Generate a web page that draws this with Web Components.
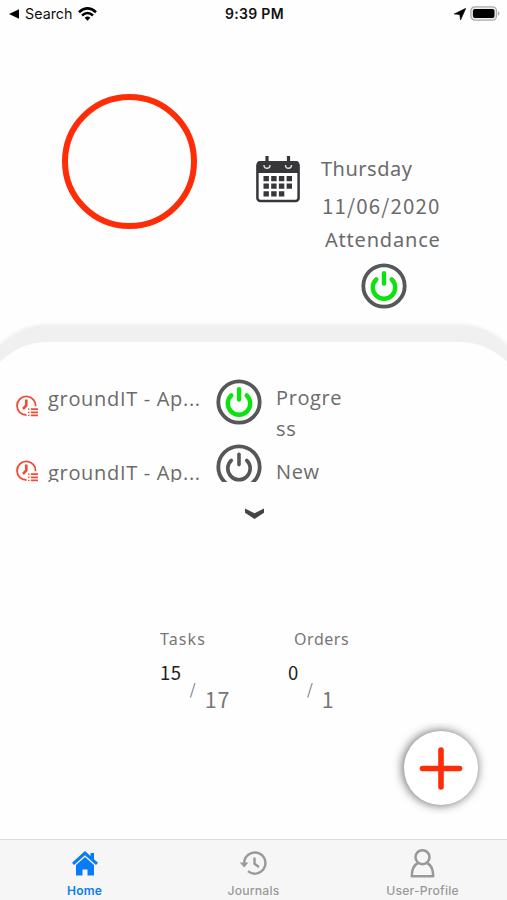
<!DOCTYPE html>
<html lang="en"><head><meta charset="utf-8"><title>Home</title>
<style>html,body{margin:0;height:900px;overflow:hidden;background:#fefefe}</style></head>
<body><home-screen></home-screen>
<script>
function define(name, css, html){
  customElements.define(name, class extends HTMLElement{
    constructor(){super();this.attachShadow({mode:'open'}).innerHTML='<style>*{box-sizing:border-box}svg{display:block}'+css+'</style>'+html;}
  });
}
define('status-bar',`:host{display:grid;grid-template-columns:1fr 1fr 1fr;height:27px;line-height:27px;font:14.3px/27px Inter,sans-serif;color:#111;padding:0 7px 0 9px}
.l{display:flex;align-items:center}.t{font-weight:600;text-align:center;font-size:14px;letter-spacing:.3px;padding-left:0;white-space:nowrap}.r{display:flex;justify-content:flex-end;align-items:center;gap:4px}`,
`<div class="l"><svg width="11" height="10"><path d="M0 5 10 0.3V9.7Z"/></svg><span style="margin-left:5px">Search</span><svg style="margin-left:6px" width="19" height="14" viewBox="0 0 19 14" fill="none" stroke="#000" stroke-width="2.6"><path d="M1 5.2Q9.5-2.4 18 5.2M4 8.4Q9.5 3.6 15 8.4"/><path d="M6.6 10.8Q9.5 8.4 12.4 10.8L9.5 13.8Z" fill="#000" stroke="none"/></svg></div>
<div class="t">9:39 PM</div>
<div class="r"><svg width="12" height="12"><path d="M.2 6 11.8.3 6.6 11.9 5.7 6.6Z" stroke="#000" stroke-width=".6"/></svg><svg width="30" height="15"><rect x=".9" y=".9" width="25.6" height="13.2" rx="4" fill="#eee" stroke="#aaa" stroke-width="1.3"/><rect x="2.9" y="2.9" width="21.6" height="9.2" rx="2"/><path d="M28 5Q31 7.5 28 10Z" fill="#aaa"/></svg></div>`);
define('power-icon',`:host{display:block;width:46px;height:46px}:host([on]){--c:#0be20f;--w:4.4}`,
`<svg width="46" height="46" fill="none" stroke-linecap="round"><circle cx="23" cy="23" r="20.7" stroke="#555758" stroke-width="3.8"/><g style="stroke:var(--c,#555758);stroke-width:var(--w,3.6)"><path d="M15.3 16.4A11.2 11.2 0 1 0 30.7 16.4"/><path d="M23 10.2V20.6"/></g></svg>`);
define('calendar-icon',`:host{display:block}`,
`<svg width="44" height="47" viewBox="0 0 44 47"><rect x="1.4" y="6.4" width="41.2" height="38.6" rx="3" fill="#fff" stroke="#37373b" stroke-width="2.5"/><path d="M1 17V8Q1 5 4 5H40Q43 5 43 8V17Z" fill="#37373b"/><g fill="none" stroke="#ddd" stroke-width="1.4"><path d="M8 9Q8 12.3 11 12.3T14 9M29.5 9Q29.5 12.3 32.5 12.3T35.5 9"/></g><path d="M11 0V9M32.5 0V9" stroke="#37373b" stroke-width="3.2"/><g fill="#37373b"><path d="M7.5 20h5.4v5.2H7.5zM15.2 20h5.4v5.2h-5.4zM22.9 20h5.4v5.2h-5.4zM30.6 20H36v5.2h-5.4zM7.5 27.5h5.4v5.2H7.5zM15.2 27.5h5.4v5.2h-5.4zM22.9 27.5h5.4v5.2h-5.4zM30.6 27.5H36v5.2h-5.4zM7.5 35.2h5.4v5.2H7.5zM15.2 35.2h5.4v5.2h-5.4zM22.9 35.2h5.4v5.2h-5.4z"/></g></svg>`);
define('clock-icon',`:host{display:block}`,
`<svg width="24" height="22" viewBox="0 0 24 22" fill="none" stroke="#f04d35"><path d="M10.5 20A9.3 9.3 0 1 1 19.6 11.2" stroke-width="1.8"/><path d="M10.3 4.5V10.4L7 14" stroke-width="2.6"/><path d="M14.8 14.2H22M14.8 17.3H22M14.8 20.4H22" stroke-width="1.7"/><path d="M12 14.2H13.5M12 17.3H13.5M12 20.4H13.5" stroke-width="1.3"/></svg>`);
define('day-header',`:host{display:grid;grid-template-columns:135px 44px 1fr;height:315px;padding:67px 0 0 62px;font:20px/28px "Noto Sans",sans-serif;color:#6b6b6b}
.ring{width:135px;height:135px;border:6px solid #fe2c07;border-radius:50%}calendar-icon{margin:62px 0 0 59px}
.info{margin-left:80px;padding-top:61px}.info div{white-space:nowrap}power-icon{margin:9px 0 0 39.5px}`,
`<div class="ring"></div><calendar-icon></calendar-icon><div class="info"><div style="letter-spacing:.5px;height:36px">Thursday</div><div style="letter-spacing:1.15px;height:34px;margin-left:1px;font-family:'Noto Sans CJK SC',sans-serif;font-size:20.5px">11/06/2020</div><div style="letter-spacing:.8px;margin:1px 0 0 4px">Attendance</div><power-icon on></power-icon></div>`);
define('task-panel',`:host{display:block;height:260px;margin:0 -20px;padding:35px 36px 0;border-radius:68px 68px 0 0;background:#fefefe;box-shadow:0 -18px 3px #f0f0f0}
.list{height:105px;overflow:hidden;display:grid;grid-template-columns:32px 168px 60px 1fr;font:20px/31px "Open Sans",sans-serif;color:#6b6b6b;letter-spacing:.6px}
.col{display:flex;flex-direction:column}.c{padding-top:18px;gap:43px}.n{padding-top:5.5px;gap:43px;white-space:nowrap;letter-spacing:.68px}.p{gap:19px;padding-top:2px}.s{padding-top:5px;gap:12px}.s div{width:68px;overflow-wrap:anywhere}
.arrow{margin:26px 0 0 229px}`,
`<div class="list"><div class="col c"><clock-icon></clock-icon><clock-icon></clock-icon></div><div class="col n"><div>groundIT - Ap...</div><div>groundIT - Ap...</div></div><div class="col p"><power-icon on></power-icon><power-icon></power-icon></div><div class="col s"><div>Progress</div><div>New</div></div></div>
<svg class="arrow" width="19" height="12"><path d="M0 .5 9.5 5.2 19 .5V4.8L9.5 11 0 4.8Z" fill="#454545"/></svg>`);
define('count-card',`:host{display:block;font-family:"Noto Sans",sans-serif;color:#777;white-space:nowrap}
.h{font-size:16px;line-height:22px;letter-spacing:var(--ls,1.1px);padding-left:var(--hp,0)}.v{display:flex;align-items:flex-start;font-family:"Noto Sans CJK SC",sans-serif}
.a{font-size:18.5px;line-height:24px;color:#222;margin-top:10px;letter-spacing:.6px}.b{font-size:15px;line-height:20px;margin:29px 0 0 var(--gap,8px);color:#777}.d{font-size:21.5px;line-height:28px;margin:35px 0 0 9px;letter-spacing:.9px}`,
`<div class="h"><slot></slot></div><div class="v"><div class="a"><slot name="done"></slot></div><div class="b">/</div><div class="d"><slot name="total"></slot></div></div>`);
define('add-button',`:host{display:block;width:74px;height:74px;border-radius:50%;background:#fff;box-shadow:-1px 0 10px 1px #777}`,
`<svg width="74" height="74"><path d="M37 19V56M18.5 37.5H55.5" stroke="#fe2c07" stroke-width="5.6" stroke-linecap="round"/></svg>`);
define('tab-item',`:host{display:flex;flex-direction:column;align-items:center;padding-top:9px;color:#999;font:500 12.2px/16px Inter,sans-serif;letter-spacing:.2px}:host([active]){color:#087cf7;font-weight:600;font-size:12px}.i{height:30px;margin-bottom:4px}`,
`<div class="i"><slot name="icon"></slot></div><div><slot></slot></div>`);
define('tab-bar',`:host{display:grid;grid-template-columns:repeat(3,1fr);height:61px;border-top:1px solid #dcdcdc;background:#f7f6f7}`,
`<tab-item active><svg slot="icon" width="26" height="30" viewBox="0 0 26 30" fill="#087cf7"><path d="M13 2 0 13.8 2 16 13 6.2 24 16 26 13.8 22 10.2V4H18.5V7Z"/><path d="M13 8 4 16V26.5H10.5V20.5H15.5V26.5H22V16Z"/></svg>Home</tab-item>
<tab-item><svg slot="icon" width="28" height="30" viewBox="0 0 28 30" fill="none" stroke="#999" stroke-width="2.4"><path d="M4.2 14A10.6 10.6 0 1 1 8 22.2"/><path d="M14.5 8.5V14.8L19 18"/><path d="M-.3 13.5H8.5L4.2 18.5Z" fill="#999" stroke="none"/></svg>Journals</tab-item>
<tab-item><svg slot="icon" width="25" height="30" viewBox="0 0 25 30" fill="none" stroke="#999" stroke-width="2.5" stroke-linejoin="round"><circle cx="12.5" cy="8.2" r="7"/><path d="M8 14Q1.8 17 1.8 27.2H23.2Q23.2 17 17 14"/></svg>User-Profile</tab-item>`);
define('home-screen',`:host{display:flex;flex-direction:column;width:507px;height:900px;overflow:hidden;background:#fefefe;position:relative}
.stats{display:flex;flex:1;padding:26px 0 0 160px}.stats count-card{width:128px;flex:none}.stats .o{--hp:6px;--gap:8px;--ls:.55px}
add-button{position:absolute;left:404px;top:731px}`,
`<status-bar></status-bar><day-header></day-header><task-panel></task-panel><div class="stats"><count-card>Tasks<span slot="done">15</span><span slot="total">17</span></count-card><count-card class="o">Orders<span slot="done">0</span><span slot="total">1</span></count-card></div><tab-bar></tab-bar><add-button></add-button>`);
</script></body></html>
